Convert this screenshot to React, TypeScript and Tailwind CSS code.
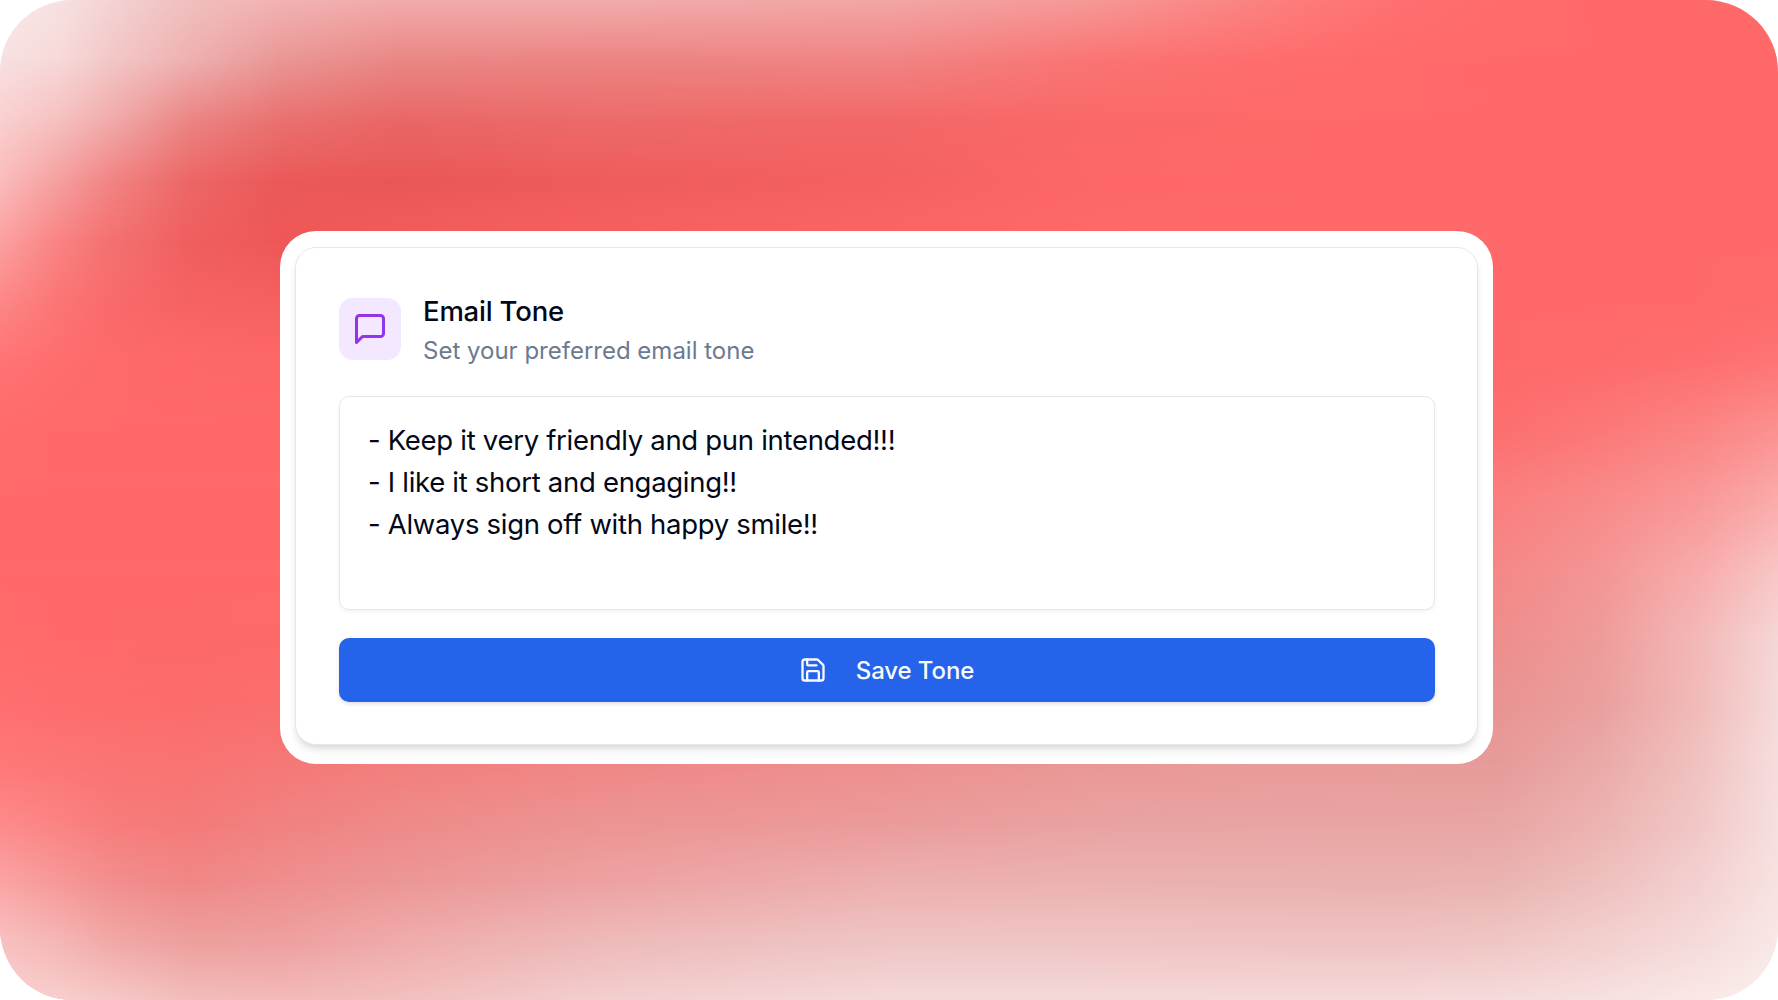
import React from 'react';
import { Save } from 'lucide-react';

// Colour mesh for the backdrop: one row per y, one colour per x in MESH_X.
const MESH_X = [0, 60, 110, 190, 280, 400, 600, 889, 1100, 1300, 1400, 1500, 1600, 1700, 1778];

const MESH_ROWS: { y: number; colors: string[] }[] = [
  { y: 0, colors: ['#f9e8e8', '#f7e1e1', '#f4d3d3', '#f1bfbf', '#f2b3b3', '#f3abab', '#f2acac', '#f3a6a6', '#f69896', '#fd7c7b', '#ff7070', '#ff6b6b', '#ff6969', '#ff6969', '#ff6969'] },
  { y: 60, colors: ['#f8e0e0', '#f7d8d8', '#f3c7c7', '#eeb0b0', '#e99795', '#e98785', '#ec8483', '#f18484', '#fa7473', '#ff6c6c', '#ff6a6a', '#ff6969', '#ff6969', '#ff6969', '#ff6969'] },
  { y: 120, colors: ['#f9d0d0', '#f5c0bf', '#f1abab', '#eb8584', '#e97170', '#e96766', '#ec6b6a', '#f26867', '#fa6968', '#ff6969', '#ff6969', '#ff6969', '#ff6969', '#ff6969', '#ff6969'] },
  { y: 180, colors: ['#fbbcbc', '#f59f9f', '#f18584', '#ec6766', '#ea5a59', '#ea5757', '#ef5c5c', '#f56161', '#fd6767', '#ff6969', '#ff6969', '#ff6969', '#ff6969', '#ff6969', '#ff6969'] },
  { y: 240, colors: ['#fca1a1', '#f98383', '#f47171', '#f05f5f', '#ee5757', '#f25c5c', '#f76060', '#fb6565', '#ff6969', '#ff6969', '#ff6969', '#ff6969', '#ff6969', '#ff6969', '#ff6969'] },
  { y: 300, colors: ['#fd8888', '#fb7575', '#f96b6b', '#f66262', '#f56060', '#f86363', '#fd6767', '#ff6969', '#ff6969', '#ff6969', '#ff6969', '#ff6969', '#ff6969', '#ff6969', '#fe6b6b'] },
  { y: 360, colors: ['#ff7474', '#ff6e6e', '#fe6a6a', '#fe6868', '#fd6767', '#ff6969', '#ff6969', '#ff6969', '#ff6969', '#ff6969', '#ff6969', '#fe6969', '#fe6b6b', '#fe6f6f', '#fe7474'] },
  { y: 430, colors: ['#ff6b6b', '#ff6969', '#ff6969', '#ff6969', '#ff6969', '#ff6969', '#ff6969', '#ff6969', '#ff6969', '#ff6969', '#fe6a6a', '#fd6f6f', '#fc7878', '#fb8484', '#fb9291'] },
  { y: 500, colors: ['#ff6969', '#ff6969', '#ff6969', '#ff6969', '#ff6969', '#ff6969', '#ff6969', '#ff6969', '#ff6969', '#fd7272', '#fc7777', '#fa7f7f', '#f98a8a', '#f99898', '#faacab'] },
  { y: 580, colors: ['#ff6969', '#ff6969', '#ff6969', '#ff6969', '#ff6969', '#ff6969', '#ff6969', '#fb7070', '#f87878', '#f68080', '#f68383', '#f48989', '#f29795', '#f7aeae', '#f8c8c8'] },
  { y: 640, colors: ['#ff6b6b', '#ff6969', '#ff6969', '#fe6969', '#fd6a6a', '#fb6e6e', '#f87474', '#f57b7b', '#f38080', '#f18787', '#f08a8a', '#ee8e8c', '#ee9c9a', '#f3b9b9', '#f6d6d6'] },
  { y: 700, colors: ['#ff6f6f', '#fe6d6d', '#fd6d6c', '#fb6c6b', '#fa6e6d', '#f77675', '#f47c7c', '#f18584', '#ef8b8a', '#ec9090', '#eb9292', '#e99493', '#ea9f9d', '#f1bbb9', '#f5dada'] },
  { y: 760, colors: ['#ff7777', '#fd7575', '#fb7373', '#f97372', '#f67777', '#f37e7d', '#f08685', '#ee8f8e', '#ea9796', '#e89a99', '#e89b99', '#e69b99', '#eaa9a7', '#f0c2c0', '#f6dddd'] },
  { y: 820, colors: ['#fd8989', '#fb8282', '#f87b7b', '#f47a79', '#f18180', '#ee8a88', '#ec9492', '#eb9a9a', '#e9a2a1', '#e8a4a2', '#e8a4a2', '#e8a5a3', '#ecb3b1', '#f1c7c6', '#f6dfdf'] },
  { y: 880, colors: ['#fba3a3', '#f69897', '#f28e8d', '#f08786', '#ef8e8d', '#ec9696', '#eda1a1', '#edafaf', '#ebb1b0', '#eab1b0', '#e9b1af', '#e9b3b1', '#eebfbd', '#f3d0d0', '#f7e2e0'] },
  { y: 940, colors: ['#f8c0c0', '#f5b5b5', '#f1a8a6', '#ed9f9d', '#ee9f9f', '#efabaa', '#eeb9b9', '#efc4c4', '#f0c4c4', '#f0c2c2', '#f0c2c2', '#efc6c4', '#f2cfcd', '#f5dada', '#f8e8e6'] },
  { y: 1000, colors: ['#f8d2d2', '#f7cecc', '#f6c8c8', '#f2bdbb', '#f3b9b9', '#f2bfbf', '#f3cece', '#f4d8d8', '#f4d8d8', '#f4d9d9', '#f4d9d9', '#f5dbdb', '#f6e0e0', '#f9e8e6', '#faeeec'] },
];

function MeshBackdrop() {
  return (
    <div className="absolute inset-0">
      {MESH_ROWS.map((row, i) => {
        const stops = row.colors.map((color, j) => `${color} ${MESH_X[j]}px`).join(', ');
        // each row fades in over the one above and ends where the next is opaque
        const fadeIn = i > 0 ? `transparent ${MESH_ROWS[i - 1].y}px, black ${row.y}px` : 'black 0px';
        const end = i < MESH_ROWS.length - 1 ? MESH_ROWS[i + 1].y : 1000;
        return (
          <div
            key={row.y}
            className="absolute inset-0"
            style={{
              backgroundImage: `linear-gradient(to right, ${stops})`,
              maskImage: `linear-gradient(to bottom, ${fadeIn}, black ${end}px, transparent ${end}px)`,
            }}
          />
        );
      })}
    </div>
  );
}

function MessageIcon() {
  return (
    <svg className="w-[36px] h-[36px]" viewBox="0 0 24 24" fill="none" stroke="currentColor" strokeWidth="2" strokeLinecap="round" strokeLinejoin="round">
      <path d="M21 15a2 2 0 0 1-2 2H7l-4 4V5a2 2 0 0 1 2-2h14a2 2 0 0 1 2 2z" />
    </svg>
  );
}

const DEFAULT_TONE = `- Keep it very friendly and pun intended!!!
- I like it short and engaging!!
- Always sign off with happy smile!!`;

export default function App() {
  const [tone, setTone] = React.useState(DEFAULT_TONE);

  return (
    <div className="w-[1778px] h-[1000px] bg-white overflow-hidden font-[Inter,sans-serif]">
      <main className="relative w-full h-full [clip-path:inset(0_round_72px)] pt-[231px] pl-[280px]">
        <MeshBackdrop />

        <div className="relative w-[1213px] h-[533px] bg-white rounded-[36px] overflow-hidden pt-4 px-[15px]">
          <section className="h-[498px] rounded-[21px] border border-slate-200 bg-white shadow-[0_7px_10px_-2px_rgba(0,0,0,0.1),0_3px_7px_-3px_rgba(0,0,0,0.1)] px-[42.5px] pt-[50px]">
            {/* Header */}
            <div className="flex items-start gap-[22.5px]">
              <div className="w-[62px] h-[62px] rounded-[14px] bg-purple-100 text-[#9333ea] flex items-center justify-center">
                <MessageIcon />
              </div>
              <div className="-mt-px">
                <h2 className="text-[27.5px] leading-7 font-medium tracking-[-0.2px] text-[#020817]">Email Tone</h2>
                <p className="mt-3 text-[24px] leading-7 text-[#6b7a90]">Set your preferred email tone</p>
              </div>
            </div>

            <textarea
              value={tone}
              onChange={(e) => setTone(e.target.value)}
              className="block mt-[31px] w-full h-[214px] resize-none rounded-[10px] border border-slate-200 bg-white px-[28.5px] pt-[22px] text-[27.5px] leading-[42.2px] tracking-[-0.3px] text-[#020817] shadow-[0_2px_4px_rgba(0,0,0,0.05)] outline-none"
            />

            <button className="mt-[28px] w-full h-[64px] rounded-[10px] bg-[#2563eb] text-slate-50 text-[24px] font-medium flex items-center justify-center gap-[29px] shadow-[0_2px_4px_rgba(0,0,0,0.12)]">
              <Save className="w-[28px] h-[28px]" />
              <span className="mt-px tracking-[-0.1px]">Save Tone</span>
            </button>
          </section>
        </div>
      </main>
    </div>
  );
}
